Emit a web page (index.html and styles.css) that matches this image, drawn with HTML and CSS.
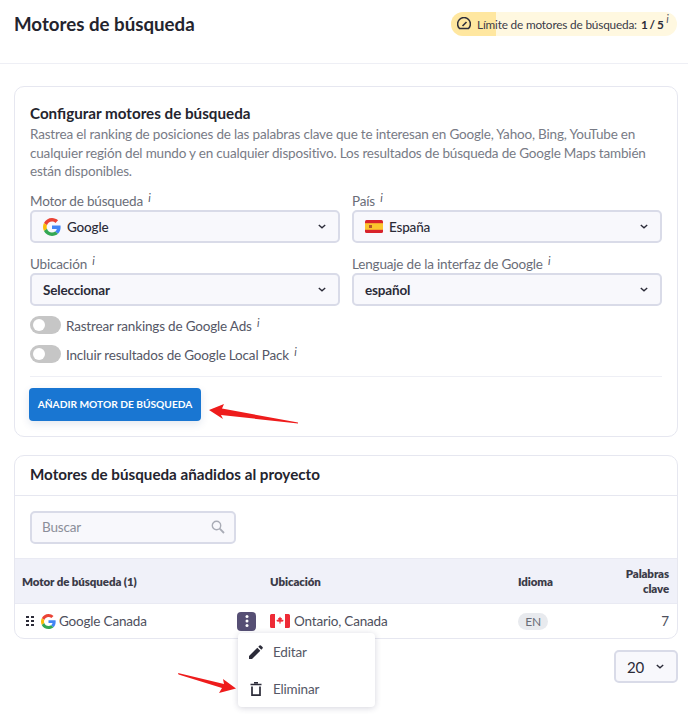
FILE: index.html
```html
<!DOCTYPE html>
<html lang="es">
<head>
    <meta charset="UTF-8">
    <title>Motores de búsqueda</title>
    <link rel="stylesheet" href="styles.css">
</head>
<body>

    <svg width="0" height="0" class="defs">
        <symbol id="google" viewBox="0 0 48 48">
            <path fill="#EA4335" d="M24 9.5c3.5 0 6.700 1.200 9.200 3.600l6.900-6.900C35.900 2.400 30.500 0 24 0 14.600 0 6.500 5.400 2.600 13.200l8 6.200C12.400 13.700 17.700 9.500 24 9.500z"/>
            <path fill="#4285F4" d="M46.900 24.500c0-1.600-.1-3.100-.4-4.500H24v9h12.900c-.6 3-2.200 5.500-4.700 7.200l7.700 6c4.500-4.200 7-10.300 7-17.700z"/>
            <path fill="#FBBC05" d="M10.500 28.600c-.5-1.400-.8-3-.8-4.600s.3-3.200.8-4.600l-8-6.200C.9 16.500 0 20.100 0 24s.9 7.500 2.600 10.800l7.900-6.200z"/>
            <path fill="#34A853" d="M24 48c6.500 0 11.900-2.100 15.900-5.800l-7.700-6c-2.200 1.400-4.900 2.300-8.200 2.300-6.300 0-11.600-4.200-13.500-9.900l-8 6.200C6.500 42.600 14.600 48 24 48z"/>
        </symbol>
        <symbol id="chevron" viewBox="0 0 10 6">
            <path d="M1 1l4 3.600L9 1" fill="none" stroke="currentColor" stroke-width="1.700"/>
        </symbol>
    </svg>

    <header class="top-bar">
        <h1>Motores de búsqueda</h1>
        <div class="limit-pill">
            <span class="limit-fill" style="width: 20%"></span>
            <svg class="limit-icon" width="14" height="14" viewBox="0 0 14 14">
                <path d="M2.500 11.500A6.400 6.400 0 1 1 11.500 11.500Z" fill="none" stroke="#2e2e3a" stroke-width="1.500" stroke-linejoin="round"/>
                <path d="M5.500 9L9.500 5" stroke="#2e2e3a" stroke-width="1.600"/>
            </svg>
            <span class="limit-text">Límite de motores de búsqueda:</span>
            <b class="limit-count">1 / 5</b><i class="hint hint-top">i</i>
        </div>
    </header>

    <section class="card config-card">
        <h2>Configurar motores de búsqueda</h2>
        <p class="intro">Rastrea el ranking de posiciones de las palabras clave que te interesan en Google, Yahoo, Bing, YouTube en cualquier región del mundo y en cualquier dispositivo. Los resultados de búsqueda de Google Maps también están disponibles.</p>

        <div class="form-grid">
            <div class="field">
                <label>Motor de búsqueda <i class="hint">i</i></label>
                <div class="select">
                    <svg width="18" height="18"><use href="#google"/></svg>
                    <span class="select-value light">Google</span>
                    <svg class="chevron" width="8" height="5"><use href="#chevron"/></svg>
                </div>
            </div>
            <div class="field">
                <label>País <i class="hint">i</i></label>
                <div class="select">
                    <svg width="18" height="13" viewBox="0 0 18 13">
                        <rect width="18" height="13" rx="1.500" fill="#d8232a"/>
                        <rect y="3.200" width="18" height="6.600" fill="#fbc52d"/>
                        <rect x="4" y="5" width="3" height="3" fill="#b5562b"/>
                    </svg>
                    <span class="select-value light">España</span>
                    <svg class="chevron" width="8" height="5"><use href="#chevron"/></svg>
                </div>
            </div>
            <div class="field">
                <label>Ubicación <i class="hint">i</i></label>
                <div class="select">
                    <span class="select-value">Seleccionar</span>
                    <svg class="chevron" width="8" height="5"><use href="#chevron"/></svg>
                </div>
            </div>
            <div class="field">
                <label>Lenguaje de la interfaz de Google <i class="hint">i</i></label>
                <div class="select">
                    <span class="select-value">español</span>
                    <svg class="chevron" width="8" height="5"><use href="#chevron"/></svg>
                </div>
            </div>
        </div>

        <div class="toggle-row">
            <span class="toggle"></span>
            <span>Rastrear rankings de Google Ads <i class="hint">i</i></span>
        </div>
        <div class="toggle-row">
            <span class="toggle"></span>
            <span>Incluir resultados de Google Local Pack <i class="hint">i</i></span>
        </div>

        <hr class="divider">
        <button class="primary-btn">AÑADIR MOTOR DE BÚSQUEDA</button>
    </section>

    <section class="card list-card">
        <h2 class="list-title">Motores de búsqueda añadidos al proyecto</h2>
        <div class="search-wrap">
            <div class="search-box">
                <span>Buscar</span>
                <svg width="14" height="14" viewBox="0 0 14 14">
                    <circle cx="5.500" cy="5.500" r="4.200" fill="none" stroke="#a9acb6" stroke-width="1.400"/>
                    <path d="M8.700 8.700L13 13" stroke="#a9acb6" stroke-width="1.800"/>
                </svg>
            </div>
        </div>

        <div class="table-row table-head">
            <div class="col-engine">Motor de búsqueda (1)</div>
            <div class="col-location">Ubicación</div>
            <div class="col-lang">Idioma</div>
            <div class="col-keywords">Palabras<br>clave</div>
        </div>
        <div class="table-row table-body">
            <div class="col-engine engine-cell">
                <svg class="grip" width="8" height="10" viewBox="0 0 8 10">
                    <path d="M0 0h3v2H0zM5 0h3v2H5zM0 4h3v2H0zM5 4h3v2H5zM0 8h3v2H0zM5 8h3v2H5z" fill="#2b2b38"/>
                </svg>
                <svg width="15" height="15"><use href="#google"/></svg>
                <span>Google Canada</span>
                <span class="more-btn">
                    <svg width="4" height="12" viewBox="0 0 4 12">
                        <circle cx="2" cy="1.500" r="1.500" fill="#fff"/>
                        <circle cx="2" cy="6" r="1.500" fill="#fff"/>
                        <circle cx="2" cy="10.500" r="1.500" fill="#fff"/>
                    </svg>
                </span>
            </div>
            <div class="col-location location-cell">
                <svg width="20" height="14" viewBox="0 0 20 14">
                    <rect width="20" height="14" rx="1.500" fill="#fff"/>
                    <path d="M1.500 0H5v14H1.500A1.500 1.500 0 0 1 0 12.500v-11A1.500 1.500 0 0 1 1.500 0zM15 0h3.500A1.500 1.500 0 0 1 20 1.500v11a1.500 1.500 0 0 1-1.500 1.500H15z" fill="#ee2b36"/>
                    <path d="M10 2.500l1 1.800 1-.4-.4 2.400 1.400-.9.500 1-.5 1.100-2.500.3.200 1.700h-1.400l.2-1.700-2.500-.3-.5-1.100.5-1 1.400.9-.4-2.400 1 .4z" fill="#ee2b36"/>
                </svg>
                <span>Ontario, Canada</span>
            </div>
            <div class="col-lang"><span class="lang-badge">EN</span></div>
            <div class="col-keywords">7</div>
        </div>
    </section>

    <div class="pager-row">
        <div class="pager">
            <span>20</span>
            <svg class="chevron" width="8" height="5"><use href="#chevron"/></svg>
        </div>
    </div>

    <div class="row-menu">
        <div class="menu-item">
            <svg width="14" height="14" viewBox="0 0 14 14">
                <path d="M0 14V11L8.300 2.700l3 3L3 14zM9.300 1.700L10.500.5a1 1 0 0 1 1.400 0l1.600 1.600a1 1 0 0 1 0 1.400l-1.200 1.200z" fill="#2b2b38"/>
            </svg>
            <span>Editar</span>
        </div>
        <div class="menu-item">
            <svg width="12" height="14" viewBox="0 0 12 14">
                <path d="M4 0.800h4M0.500 2.500h11" stroke="#2b2b38" stroke-width="1.500"/>
                <path d="M2 4.500v8.700h8V4.500" fill="none" stroke="#2b2b38" stroke-width="1.700"/>
            </svg>
            <span>Eliminar</span>
        </div>
    </div>

    <!-- flechas rojas encima de la captura -->
    <svg class="arrows" width="688" height="717" viewBox="0 0 688 717">
        <path d="M209 410L224 404L222 408.500L298 422.500L298 423.500L221 415L223 419Z" fill="#ee1c1c"/>
        <path d="M178 673L178.500 674.500L222 688L219 693L236 688.500L223 679L224 684Z" fill="#ee1c1c"/>
    </svg>

</body>
</html>
```

FILE: styles.css
```css
* {
    box-sizing: border-box;
}
body {
    margin: 0;
    height: 717px;
    overflow: hidden;
    position: relative;
    font-family: Lato, "Liberation Sans", sans-serif;
    font-size: 13.500px;
    letter-spacing: -0.18px;
    color: #2b2b38;
    background-color: #fff;
}
.defs {
    position: absolute;
}
.top-bar {
    height: 64px;
    padding: 12px 11px 0 14px;
    display: flex;
    justify-content: space-between;
    align-items: flex-start;
    border-bottom: 1px solid #eeeff5;
}
h1 {
    margin: 0;
    font-size: 18.700px;
    line-height: 24px;
    font-weight: 700;
    letter-spacing: 0;
    color: #24242e;
}
.limit-pill {
    position: relative;
    overflow: hidden;
    width: 226px;
    height: 24px;
    padding-left: 6px;
    display: flex;
    align-items: center;
    border-radius: 12px;
    font-size: 11.800px;
    white-space: nowrap;
    background-color: #fff8e0;
}
.limit-fill {
    position: absolute;
    left: 0;
    top: 0;
    bottom: 0;
    background-color: #ffe7a0;
}
.limit-icon, .limit-text, .limit-count, .hint-top {
    position: relative;
}
.limit-text {
    margin-left: 6px;
    color: #3b3b48;
}
.limit-count {
    margin-left: 4px;
    font-weight: 700;
    letter-spacing: -0.5px;
}
.hint {
    font-size: 11px;
    color: #555766;
    vertical-align: 4px;
    margin-left: 2px;
}
.hint-top {
    align-self: flex-start;
    margin-top: 0;
    margin-left: 3px;
}
.card {
    margin: 0 10px 0 14px;
    border: 1px solid #e6e7f0;
    border-radius: 10px;
    background-color: #fff;
}
.config-card {
    margin-top: 22px;
    height: 351px;
    padding: 16px 15px 0;
}
h2 {
    margin: 0;
    font-size: 15.200px;
    line-height: 20px;
    font-weight: 700;
    letter-spacing: 0;
    color: #24242e;
}
.intro {
    margin: 2px 0 0;
    line-height: 18.500px;
    color: #787b86;
}
.form-grid {
    display: grid;
    grid-template-columns: 310px 310px;
    column-gap: 12px;
    row-gap: 9px;
    margin-top: 8px;
}
.field label {
    display: block;
    height: 21px;
    line-height: 17px;
    color: #6a6d78;
}
.select {
    height: 33px;
    padding: 1px 12px 0 11px;
    display: flex;
    align-items: center;
    gap: 6px;
    border: 2px solid #d9dbe8;
    border-radius: 5px;
    background-color: #f8f8fc;
}
.select-value {
    flex: 1;
    font-weight: 700;
    color: #2b2b38;
}
.select-value.light {
    font-weight: 500;
}
.chevron {
    color: #2b2b38;
}
.toggle-row {
    display: flex;
    align-items: center;
    gap: 5px;
    height: 18px;
    margin-top: 11px;
    color: #555766;
}
.form-grid + .toggle-row {
    margin-top: 10px;
}
.toggle {
    position: relative;
    width: 31px;
    height: 18px;
    border-radius: 9px;
    background-color: #c6c6c6;
}
.toggle::before {
    content: "";
    position: absolute;
    left: 3px;
    top: 3px;
    width: 12px;
    height: 12px;
    border-radius: 50%;
    background-color: #fff;
}
.divider {
    margin: 13px 0 11px;
    border: none;
    border-top: 1px solid #eeeff5;
}
.primary-btn {
    display: block;
    width: 172px;
    height: 33px;
    margin-left: -1px;
    padding: 0;
    border: none;
    border-radius: 4px;
    font-family: inherit;
    font-size: 10.200px;
    font-weight: 700;
    color: #fff;
    background-color: #1976d2;
    box-shadow: 0 3px 8px rgba(25, 60, 120, 0.12);
}
.list-card {
    margin-top: 18px;
    height: 184px;
    overflow: hidden;
}
.list-title {
    height: 40px;
    padding: 0 15px;
    line-height: 37px;
    border-bottom: 1px solid #e6e7f0;
}
.search-wrap {
    height: 62px;
    padding: 15px;
}
.search-box {
    width: 206px;
    height: 33px;
    padding: 0 9px 2px 10px;
    display: flex;
    justify-content: space-between;
    align-items: center;
    border: 2px solid #d9dbe8;
    border-radius: 5px;
    color: #8b8e99;
    background-color: #f8f8fc;
}
.table-row {
    display: flex;
    align-items: center;
}
.table-head {
    height: 46px;
    border-top: 1px solid #e9eaf3;
    border-bottom: 1px solid #e9eaf3;
    font-size: 11.500px;
    line-height: 15px;
    font-weight: 800;
    letter-spacing: -0.1px;
    color: #3b3b48;
    background-color: #f0f1f9;
}
.table-body {
    height: 34px;
    color: #4e505d;
}
.col-engine {
    width: 255px;
    padding-left: 7px;
}
.col-location {
    width: 248px;
}
.col-lang {
    width: 75px;
}
.col-keywords {
    width: 84px;
    padding-right: 8px;
    text-align: right;
}
.engine-cell {
    display: flex;
    align-items: center;
    padding-left: 11px;
}
.grip {
    margin-right: 7px;
}
.engine-cell span:first-of-type {
    margin-left: 3px;
}
.more-btn {
    width: 19px;
    height: 19px;
    margin-left: auto;
    margin-right: 14px;
    display: flex;
    align-items: center;
    justify-content: center;
    border-radius: 4px;
    background-color: #564f74;
}
.location-cell {
    display: flex;
    align-items: center;
    gap: 4px;
}
.lang-badge {
    display: inline-block;
    width: 30px;
    height: 17px;
    line-height: 17px;
    border-radius: 9px;
    text-align: center;
    font-size: 12px;
    color: #6a6d78;
    background-color: #e8eaee;
}
.pager-row {
    display: flex;
    justify-content: flex-end;
    padding: 11px 10px 0 0;
}
.pager {
    width: 64px;
    height: 33px;
    padding: 0 12px 0 11px;
    display: flex;
    justify-content: space-between;
    align-items: center;
    border: 2px solid #d9dbe8;
    border-radius: 5px;
    font-size: 15px;
    background-color: #f8f8fc;
}
.row-menu {
    position: absolute;
    left: 238px;
    top: 633px;
    width: 137px;
    height: 74px;
    border-radius: 4px;
    background-color: #fff;
    box-shadow: 0 1px 6px rgba(40, 40, 80, 0.2);
}
.menu-item {
    height: 37px;
    padding-left: 11px;
    display: flex;
    align-items: center;
    color: #555766;
}
.menu-item svg {
    margin-right: 10px;
}
.menu-item:last-child svg {
    margin-left: 1px;
    margin-right: 11px;
}
.arrows {
    position: absolute;
    left: 0;
    top: 0;
    pointer-events: none;
}
```
